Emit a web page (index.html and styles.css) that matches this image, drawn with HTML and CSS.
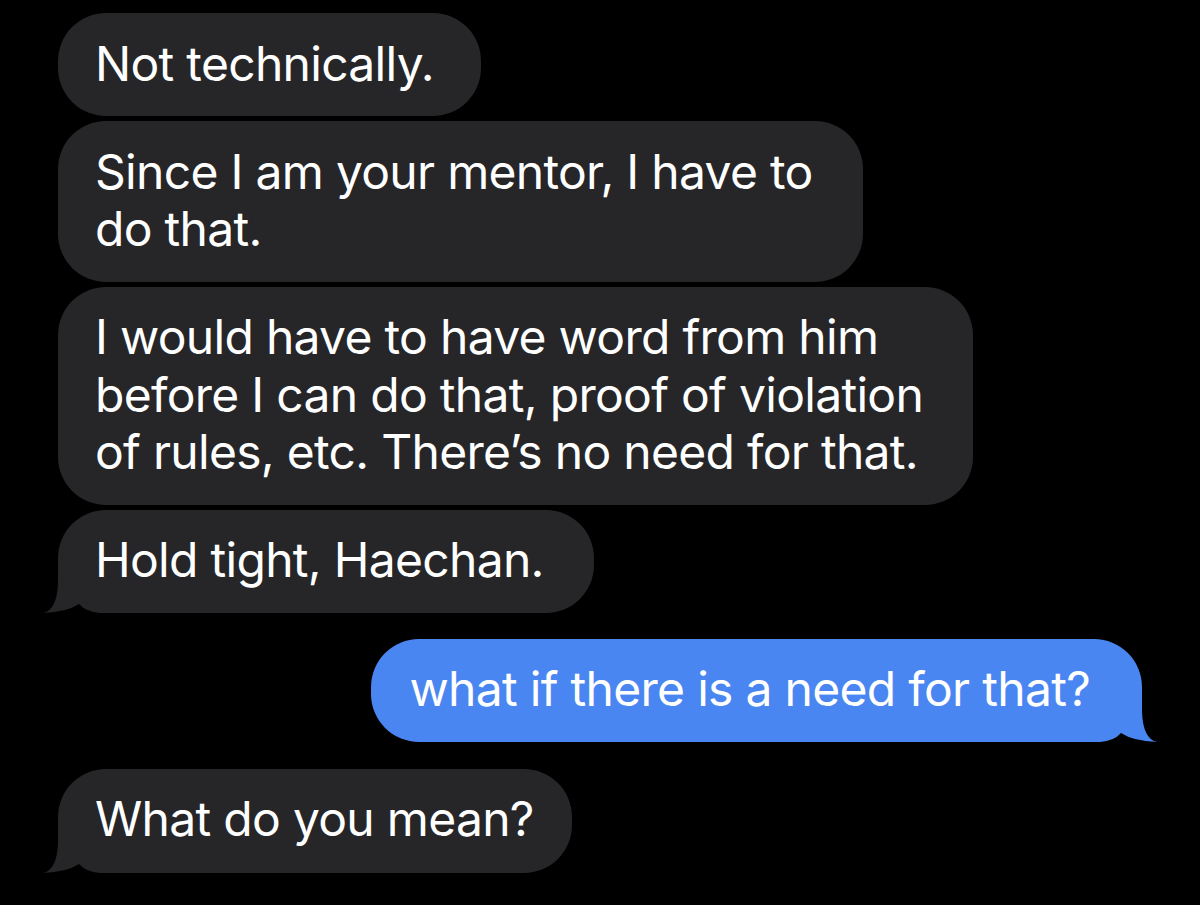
FILE: index.html
```html
<!DOCTYPE html>
<html>
<head>
<meta charset="utf-8">
<link rel="stylesheet" href="styles.css">
</head>
<body>
<div class="thread">
  <div class="bubble in first">Not technically.</div>
  <div class="bubble in">Since I am your mentor, I have to<br>do that.</div>
  <div class="bubble in">I would have to have word from him<br>before I can do that, proof of violation<br>of rules, etc. There’s no need for that.</div>
  <div class="bubble in tail">Hold tight, Haechan.<svg class="tail-svg" width="68" height="52" viewBox="0 0 68 52"><path class="tail-fill" d="M16,22 Q15,49 1,52 L16,52 Z"/><path class="notch" d="M1,52 Q25,51 37,43 Q44,51 58,52 Z"/></svg></div>
  <div class="bubble out tail">what if there is a need for that?<svg class="tail-svg" width="68" height="52" viewBox="0 0 68 52"><path class="tail-fill" d="M16,22 Q15,49 1,52 L16,52 Z"/><path class="notch" d="M1,52 Q25,51 37,43 Q44,51 58,52 Z"/></svg></div>
  <div class="bubble in tail last">What do you mean?<svg class="tail-svg" width="68" height="52" viewBox="0 0 68 52"><path class="tail-fill" d="M16,22 Q15,49 1,52 L16,52 Z"/><path class="notch" d="M1,52 Q25,51 37,43 Q44,51 58,52 Z"/></svg></div>
</div>
</body>
</html>
```
FILE: styles.css
```css
html, body {
  margin: 0;
  padding: 0;
  background: #000;
}
body {
  width: 1200px;
  height: 905px;
  overflow: hidden;
}
.thread {
  display: flex;
  flex-direction: column;
  align-items: flex-start;
  gap: 5px;
  padding: 13px 58px 0 58px;
}
.bubble {
  position: relative;
  font-family: Inter, "Liberation Sans", sans-serif;
  font-size: 48px;
  letter-spacing: -0.7px;
  line-height: 57.5px;
  color: #fff;
  white-space: nowrap;
  padding: 21.75px 50px 23.75px 37px;
  border-radius: 48px;
}
.in {
  background: #262629;
}
.first {
  padding-right: 47px;
}
.out {
  background: #4a86f1;
  align-self: flex-end;
  margin-top: 21px;
  padding-left: 38px;
  padding-right: 52px;
}
.last {
  margin-top: 22px;
  padding-right: 38px;
  padding-bottom: 25px;
}
.tail-svg {
  position: absolute;
  bottom: 0;
  left: -16px;
  display: block;
}
.in.tail { border-bottom-left-radius: 0; }
.out.tail { border-bottom-right-radius: 0; }
.out .tail-svg {
  left: auto;
  right: -16px;
  transform: scaleX(-1);
}
.in .tail-fill { fill: #262629; }
.out .tail-fill { fill: #4a86f1; }
.notch { fill: #000; }
```
